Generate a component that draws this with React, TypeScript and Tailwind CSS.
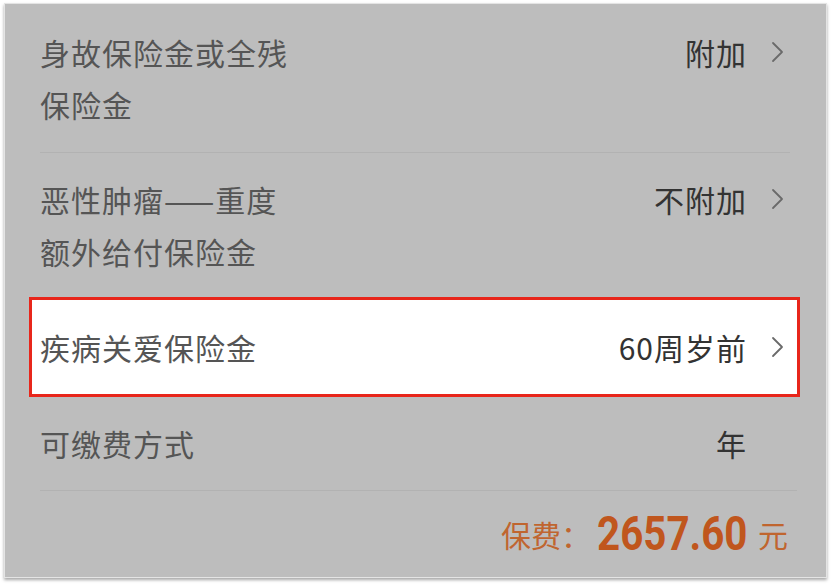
import React from 'react';

const cjk = { fontFamily: '"Noto Sans CJK SC", "Noto Sans", sans-serif' };

function Chevron() {
  return (
    <svg className="w-[14px] h-[22px] text-[#6a6a6a]" viewBox="0 0 14 22" fill="none" stroke="currentColor">
      <path d="M2 2l9 9-9 9" strokeWidth={1.8} strokeLinecap="round" strokeLinejoin="round" />
    </svg>
  );
}

export default function App() {
  return (
    <div className="w-[832px] h-[584px] bg-white pt-[3px] pl-[4px]" style={cjk}>
      <div className="w-[823px] h-[575px] border border-[#e4e4e4] shadow-[0_2px_3px_rgba(0,0,0,0.35)] bg-[#bdbdbd] flex flex-col">
        {/* 身故 */}
        <div className="h-[148px] flex items-center pl-[35px] pr-[41px]">
          <div className="flex-1 text-[30px] leading-[52px] text-[#555] tracking-[1px]">
            <div>身故保险金或全残</div>
            <div>保险金</div>
          </div>
          <div className="self-stretch flex items-start pt-[22px]">
            <div className="h-[52px] flex items-center">
              <span className="text-[30px] text-[#333] tracking-[1px]">附加</span>
              <span className="ml-[24px]"><Chevron /></span>
            </div>
          </div>
        </div>
        <div className="h-px bg-[#b2b2b2] ml-[35px] mr-[36px]" />

        {/* 恶性肿瘤 */}
        <div className="h-[144px] flex items-center pl-[35px] pr-[41px]">
          <div className="flex-1 text-[30px] leading-[52px] text-[#555] tracking-[1px]">
            <div>恶性肿瘤——重度</div>
            <div>额外给付保险金</div>
          </div>
          <div className="self-stretch flex items-start pt-[20px]">
            <div className="h-[52px] flex items-center">
              <span className="text-[30px] text-[#333] tracking-[1px]">不附加</span>
              <span className="ml-[24px]"><Chevron /></span>
            </div>
          </div>
        </div>

        {/* highlighted */}
        <div className="h-[100px] ml-[24px] mr-[26px] border-[3px] border-[#e8261b] bg-white flex items-center pl-[8px] pr-[12px]">
          <span className="flex-1 text-[30px] text-[#555] tracking-[1px]">疾病关爱保险金</span>
          <span className="text-[30px] text-[#333] tracking-[1px]">60周岁前</span>
          <span className="ml-[24px]"><Chevron /></span>
        </div>

        {/* 可缴费方式 */}
        <div className="h-[93px] flex items-center pl-[35px] pr-[80px]">
          <span className="flex-1 text-[30px] text-[#555] tracking-[1px]">可缴费方式</span>
          <span className="text-[30px] text-[#333]">年</span>
        </div>
        <div className="h-px bg-[#b2b2b2] ml-[35px] mr-[29px]" />

        {/* 保费 */}
        <div className="flex-1 flex items-center justify-end pr-[38px]">
          <span className="text-[30px] text-[#c0652f] mr-[6px]">保费：</span>
          <span
            className="inline-block w-[150px] text-[48px] font-bold text-[#c0561d] leading-none scale-x-[0.84] origin-left whitespace-nowrap -mr-[2px]"
            style={{ fontFamily: 'Roboto, "Liberation Sans", sans-serif' }}
          >
            2657.60
          </span>
          <span className="text-[30px] text-[#c0652f] ml-[13px]">元</span>
        </div>
      </div>
    </div>
  );
}
